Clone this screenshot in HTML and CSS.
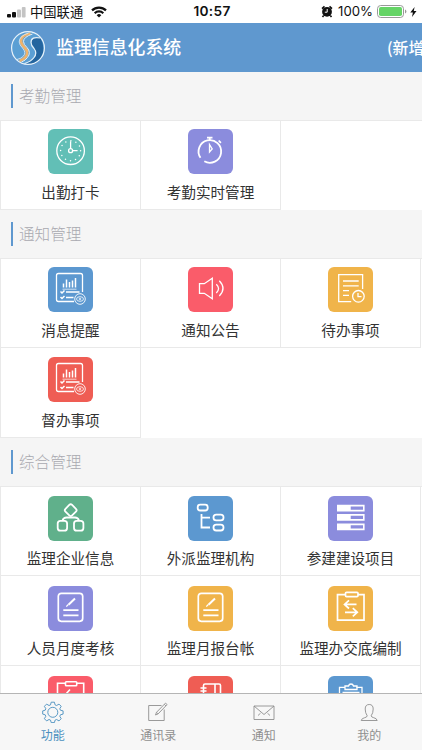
FILE: index.html
```html
<!DOCTYPE html>
<html lang="zh-CN">
<head>
    <meta charset="UTF-8">
    <meta name="viewport" content="width=device-width, initial-scale=1.0">
    <title>监理信息化系统</title>
    <link rel="stylesheet" href="styles.css">
</head>
<body>
    <!-- shared icons -->
    <svg class="defs" width="0" height="0">
        <symbol id="report" viewBox="0 0 45 45">
            <path d="M26 34.500H10.500a2 2 0 0 1-2-2V8.500a2 2 0 0 1 2-2h22a2 2 0 0 1 2 2V25"/>
            <path d="M15.500 20.500v-4M18.500 20.500v-8M21.500 20.500v-5.500M24.500 20.500v-7M27.500 20.500v-9.500" stroke-width="1.500"/>
            <path d="M14.500 22.200h14" stroke-width=".7"/>
            <path d="M12.500 24.500l1.500 1.500 2.500-2.500M12.500 30l1.500 1.500 2.500-2.500M18 25h13.500M18 30.500h7.500" stroke-width="1.500"/>
            <circle cx="32" cy="32" r="5.300" stroke-width=".9"/>
            <ellipse cx="32" cy="32" rx="3.500" ry="2.300" stroke-width=".8"/>
            <circle cx="32" cy="32" r=".8" stroke-width=".8"/>
        </symbol>
        <symbol id="note" viewBox="0 0 45 45">
            <rect x="10.300" y="7.300" width="24.400" height="28" rx="3" stroke-width="1.700"/>
            <path d="M27 12.500l-6.500 6.300" stroke-width="2"/>
            <path d="M20.300 18.500l-2 2.200" stroke-width="1.200"/>
            <path d="M15.300 24.200h15.200M15.300 29.300h15.200" stroke-width="1.700"/>
        </symbol>
    </svg>

    <div class="app">
        <div class="status-bar">
            <div class="status-left">
                <svg width="20" height="12" viewBox="0 0 20 12">
                    <rect x="0" y="8" width="4" height="3.500" rx="1" fill="#111"/>
                    <rect x="5" y="6" width="4" height="5.500" rx="1" fill="#111"/>
                    <rect x="10" y="3.500" width="4" height="8" rx="1" fill="#c4c4c4"/>
                    <rect x="14.800" y="1" width="3.800" height="10.500" rx="1" fill="#c4c4c4"/>
                </svg>
                <span class="carrier">中国联通</span>
                <svg width="16" height="12" viewBox="0 0 16 12" fill="none" stroke="#111" stroke-width="2.200">
                    <path d="M1 4.400a10 10 0 0 1 14 0M3.700 7.200a6.200 6.200 0 0 1 8.600 0"/>
                    <path d="M8 11.500L5.700 9.200a3.300 3.300 0 0 1 4.600 0z" fill="#111" stroke="none"/>
                </svg>
            </div>
            <div class="time">10:57</div>
            <div class="status-right">
                <svg width="12" height="13" viewBox="0 0 12 13">
                    <circle cx="6" cy="6.800" r="4.900" fill="#111"/>
                    <path d="M1 3.600L3.500 1.400M11 3.600L8.500 1.400M2.700 10.500l-1.200 1.500M9.300 10.500l1.200 1.500" stroke="#111" stroke-width="1.600"/>
                    <path d="M6.200 4v3.200H3.800" fill="none" stroke="#fff"/>
                </svg>
                <span class="percent">100%</span>
                <svg width="30" height="13" viewBox="0 0 30 13">
                    <rect x=".5" y=".5" width="26" height="12" rx="3.200" fill="#fff" stroke="#999"/>
                    <rect x="2" y="2" width="23" height="9" rx="1.800" fill="#65d466"/>
                    <path d="M28 4.500v4q1.400-.6 1.400-2t-1.400-2" fill="#999"/>
                </svg>
                <svg width="7" height="10" viewBox="0 0 7 10"><path d="M4.600 0L.3 5.600h2.600L2 10l4.500-5.900H3.800z" fill="#111"/></svg>
            </div>
        </div>

        <div class="header">
            <svg class="logo" width="36" height="36" viewBox="0 0 36 36">
                <circle cx="18" cy="18" r="16.400" fill="#5b9fd4"/>
                <path d="M30.500 8Q22 6.500 21.500 12q0 3 3 6.500 3.500 4.500 0 9-3 3.500-9.500 6.500 9 1.500 14.500-4.500Q37 20 30.500 8z" fill="#24659f"/>
                <path d="M30.500 8q-9.500-2-9.500 4.500 0 3 3 6 3.500 4.500 0 9-3 4-9.500 6" fill="none" stroke="#e3eff7" stroke-width="1.200"/>
                <path d="M20.500 3.500q-10 2-9.500 8 .3 3 4 6.500 4 4.500.5 9-2 2.800-6 4" fill="none" stroke="#f0b36b" stroke-width="2.800"/>
                <path d="M22.500 4q-9 3-9 7.500 0 3 3.500 6 4.500 5 .5 10-2 3-6 4.500" fill="none" stroke="#e3eff7"/>
                <path d="M18.500 3q-9.500 3-9.300 9 .3 3 3.300 6 4 4.500 1 8-2 2.500-6.500 3.500" fill="none" stroke="#e3eff7" stroke-width=".8"/>
                <circle cx="18" cy="18" r="16.400" fill="none" stroke="#e9f3fa" stroke-width="1.200"/>
            </svg>
            <div class="title">监理信息化系统</div>
            <div class="action">(新增)</div>
        </div>

        <div class="content">
            <div class="section-title">考勤管理</div>
            <div class="grid">
                <div class="cell">
                    <svg class="icon teal" viewBox="0 0 45 45">
                        <circle cx="22.600" cy="21.700" r="13.800"/>
                        <circle cx="22.600" cy="21.700" r="10" stroke-width="1.500" stroke-dasharray="0 5.236" stroke-linecap="round"/>
                        <circle cx="22.600" cy="21.700" r="2"/>
                        <path d="M22.600 19.700v-7.500M24.600 21.700h5"/>
                    </svg>
                    <span>出勤打卡</span>
                </div>
                <div class="cell">
                    <svg class="icon purple" viewBox="0 0 45 45">
                        <path d="M16.300 32.300A11.300 11.300 0 1 0 12.500 28.800" stroke-width="1.800"/>
                        <path d="M19 8.700h5.500M21.700 9v2.500M30.700 11.500l2.200 2.300" stroke-width="1.800"/>
                        <path d="M21.500 15.500v7.500l2.700-3z"/>
                    </svg>
                    <span>考勤实时管理</span>
                </div>
            </div>

            <div class="section-title">通知管理</div>
            <div class="grid">
                <div class="cell">
                    <svg class="icon blue"><use href="#report"/></svg>
                    <span>消息提醒</span>
                </div>
                <div class="cell">
                    <svg class="icon pink" viewBox="0 0 45 45">
                        <path d="M11.500 16.700h4.800l8-5.500v20.600l-8-5.500h-4.800z"/>
                        <path d="M28.300 17.200q4.500 4.300 0 8.800M31.300 13.700q7.500 7.700 0 15.300"/>
                    </svg>
                    <span>通知公告</span>
                </div>
                <div class="cell">
                    <svg class="icon orange" viewBox="0 0 45 45">
                        <path d="M34.600 22V7.700H10.700v27h12.500M15 14h15.700M15 18.800h15.700M15 23.600h6M15 28.400h6"/>
                        <circle cx="30.400" cy="29.300" r="5.800"/>
                        <path d="M30 26v3.700h3.500"/>
                    </svg>
                    <span>待办事项</span>
                </div>
                <div class="cell">
                    <svg class="icon red"><use href="#report"/></svg>
                    <span>督办事项</span>
                </div>
            </div>

            <div class="section-title">综合管理</div>
            <div class="grid low">
                <div class="cell">
                    <svg class="icon green" viewBox="0 0 45 45">
                        <g stroke-width="1.800">
                            <rect x="18" y="9.500" width="9.400" height="9.400" rx="2" transform="rotate(45 22.700 14.200)"/>
                            <path d="M22.700 20.500v1.200M14.500 24.500q1-3 4-3h8.500q3 0 4 3"/>
                            <rect x="9.700" y="24.800" width="9.400" height="9.800" rx="2.700"/>
                            <rect x="26" y="24.800" width="9.400" height="9.800" rx="2.700"/>
                        </g>
                    </svg>
                    <span>监理企业信息</span>
                </div>
                <div class="cell">
                    <svg class="icon blue" viewBox="0 0 45 45">
                        <g stroke-width="1.800">
                            <rect x="9.700" y="8.700" width="10" height="5.800" rx="2.500"/>
                            <path d="M13.500 18v13.500h8.500M13.500 21.700h8.500"/>
                            <rect x="25.500" y="18.600" width="10" height="5.800" rx="2.700"/>
                            <rect x="25.500" y="28.700" width="10" height="5.800" rx="2.700"/>
                        </g>
                    </svg>
                    <span>外派监理机构</span>
                </div>
                <div class="cell">
                    <svg class="icon purple" viewBox="0 0 45 45">
                        <path d="M9 8.700h27.600v6.800H9zM9 18h27.600v6.800H9zM9 27.500h27.600v6.800H9z" fill="#fff" stroke="none"/>
                        <path d="M22.700 12.100h12.300M22.700 21.400h12.300M22.700 30.900h12.300" stroke="#8b8cdd" stroke-width="3.300"/>
                    </svg>
                    <span>参建建设项目</span>
                </div>
                <div class="cell">
                    <svg class="icon purple"><use href="#note"/></svg>
                    <span>人员月度考核</span>
                </div>
                <div class="cell">
                    <svg class="icon orange"><use href="#note"/></svg>
                    <span>监理月报台帐</span>
                </div>
                <div class="cell">
                    <svg class="icon orange" viewBox="0 0 45 45">
                        <g stroke-width="1.700">
                            <path d="M17.500 8.700H9.500v25.500h26.500V8.700h-6"/>
                            <rect x="17.500" y="6.300" width="12.500" height="4.300" rx="1"/>
                            <path d="M28.500 18.400H16.800M21 14.300l-4.500 4.100 4.500 4.100M17 26.300h12M24.800 22.200l4.500 4.100-4.500 4.100"/>
                        </g>
                    </svg>
                    <span>监理办交底编制</span>
                </div>
                <div class="cell">
                    <svg class="icon pink" viewBox="0 0 45 45">
                        <g stroke-width="1.600">
                            <path d="M17.500 7.300H9.500v27.500h26.200V7.300h-7"/>
                            <rect x="17.500" y="5.700" width="11.200" height="4" rx=".7"/>
                            <path d="M22 13.500l-4.500 5M15 24h15M15 29h15"/>
                        </g>
                    </svg>
                </div>
                <div class="cell">
                    <svg class="icon red" viewBox="0 0 45 45">
                        <path d="M15.500 35.500V9.500q0-1.500 1.500-1.500h14q1.500 0 1.500 1.500v26zM27 8v27M12.500 12h6M12.500 15h6M12.500 24h6M12.500 27h6" stroke-width="1.600"/>
                    </svg>
                </div>
                <div class="cell">
                    <svg class="icon blue" viewBox="0 0 45 45">
                        <path d="M17 11.300h-5.500v24h22.500v-24h-5.500"/>
                        <path d="M17 13.500h12V10h-3.500q-.5-2-2.500-2t-2.500 2H17zM14.500 16.500h17"/>
                    </svg>
                </div>
            </div>
        </div>

        <div class="tab-bar">
            <div class="tab active">
                <svg width="22" height="22" viewBox="0 0 22 22">
                    <path d="M9.200 1.200h3.200l.7 2.700 1.500.6L17 3.100l2.200 2.200-1.400 2.400.6 1.500 2.700.7v3.200l-2.700.7-.6 1.500 1.400 2.400-2.200 2.200-2.400-1.400-1.500.6-.7 2.500H9.200l-.7-2.500-1.500-.6-2.400 1.400-2.200-2.200 1.400-2.400-.6-1.500-2.500-.7V9.900l2.500-.7.6-1.500-1.400-2.400 2.200-2.200L7 4.500l1.500-.6z" stroke-linejoin="round"/>
                    <circle cx="10.800" cy="11.300" r="5"/>
                </svg>
                <span>功能</span>
            </div>
            <div class="tab">
                <svg width="22" height="22" viewBox="0 0 22 22">
                    <path d="M14.500 4.500H1.700v15h15.500V8.500"/>
                    <path d="M8.500 14l1-2.700 9-9.200 1.600 1.500-9 9.300zM9.500 11.300l1.600 1.600M17.300 3.300l1.600 1.600"/>
                </svg>
                <span>通讯录</span>
            </div>
            <div class="tab">
                <svg width="22" height="22" viewBox="0 0 22 22">
                    <path d="M1 5h20v13.500H1zM1 5l10 8.500L21 5M5 14.500l2.500-2.300M17 14.500l-2.500-2.300"/>
                </svg>
                <span>通知</span>
            </div>
            <div class="tab">
                <svg width="22" height="22" viewBox="0 0 22 22">
                    <path d="M9.200 14.800Q7.200 12 7.200 8q0-4.500 4-4.500t4 4.500q0 4-2 6.800.2 1.500 2.500 1.900 3 .6 3.500 2.800H3.200q.5-2.200 3.500-2.800 2.300-.4 2.500-1.900z"/>
                </svg>
                <span>我的</span>
            </div>
        </div>
    </div>
</body>
</html>
```
FILE: styles.css
```css
* {
    box-sizing: border-box;
}
body {
    margin: 0;
    font-family: "Noto Sans CJK SC", sans-serif;
    color: #333;
    background-color: #f5f5f5;
}
.defs {
    display: block;
    height: 0;
}
.app {
    display: flex;
    flex-direction: column;
    height: 750px;
    overflow: hidden;
}

/* status bar */
.status-bar {
    display: grid;
    grid-template-columns: 1fr auto 1fr;
    align-items: center;
    flex: none;
    height: 23px;
    padding: 0 5px 0 7px;
    background-color: #fff;
    color: #111;
    font-size: 13.3px;
    line-height: 23px;
}
.status-left, .status-right {
    display: flex;
    align-items: center;
}
.carrier {
    margin: 0 8px 0 3px;
}
.time {
    font-family: Inter, sans-serif;
    font-size: 13.7px;
    font-weight: 600;
    letter-spacing: 0.3px;
}
.status-right {
    justify-content: flex-end;
}
.percent {
    margin: 0 4px 0 5px;
    font-family: Inter, sans-serif;
    font-size: 13.2px;
}
.status-right svg:last-child {
    margin-left: 3px;
}

/* header */
.header {
    display: flex;
    align-items: center;
    flex: none;
    height: 49px;
    padding-left: 10px;
    background-color: #5f98cf;
    color: #fff;
    white-space: nowrap;
    overflow: hidden;
}
.logo {
    flex: none;
}
.title {
    flex: none;
    width: 341px;
    padding: 0 0 3px 10px;
    font-size: 17.9px;
    font-weight: 500;
}
.action {
    padding-bottom: 1px;
    font-size: 15.8px;
    font-weight: 500;
}

/* content */
.content {
    flex: 1;
    min-height: 0;
    overflow: hidden;
}
.section-title {
    display: flex;
    align-items: center;
    height: 48px;
    padding: 0 0 2px 11px;
    color: #a9a9b0;
    font-size: 15.6px;
    font-weight: 300;
}
.section-title::before {
    content: "";
    width: 2px;
    height: 24px;
    margin: 2px 6px 0 0;
    background-color: #5f98cf;
}
.grid {
    display: grid;
    grid-template-columns: repeat(3, 140px);
    grid-auto-rows: 90px;
    padding-left: 1px;
    background-color: #fff;
    box-shadow: inset 1px 1px #e9e9e9;
}
.cell {
    display: flex;
    flex-direction: column;
    align-items: center;
    padding: 9px 1px 0 0;
    font-size: 14.6px;
    line-height: 22px;
    box-shadow: inset -1px -1px #e9e9e9;
    white-space: nowrap;
}
.cell span {
    margin-top: 7px;
}
.low .cell {
    padding-top: 10px;
}
.low .cell span {
    margin-top: 6px;
}
.icon {
    width: 45px;
    height: 45px;
    border-radius: 6px;
    fill: none;
    stroke: #fff;
    stroke-width: 1.3;
}
.teal {
    background-color: #62bfb6;
}
.purple {
    background-color: #8b8cdd;
}
.blue {
    background-color: #5c98d0;
}
.pink {
    background-color: #fa5c6a;
}
.orange {
    background-color: #f0b44a;
}
.red {
    background-color: #ef5d54;
}
.green {
    background-color: #60b08b;
}

/* tab bar */
.tab-bar {
    display: flex;
    flex: none;
    height: 57px;
    border-top: 1px solid #b5b5b5;
    background-color: #f7f7f7;
}
.tab {
    display: flex;
    flex: 1;
    flex-direction: column;
    align-items: center;
    padding-top: 7px;
    color: #8f8f8f;
    font-size: 12px;
    line-height: 18px;
}
.tab svg {
    fill: none;
    stroke: currentColor;
    stroke-width: 0.9;
}
.tab span {
    margin-top: 3px;
}
.tab.active {
    color: #4a90bf;
}
```
